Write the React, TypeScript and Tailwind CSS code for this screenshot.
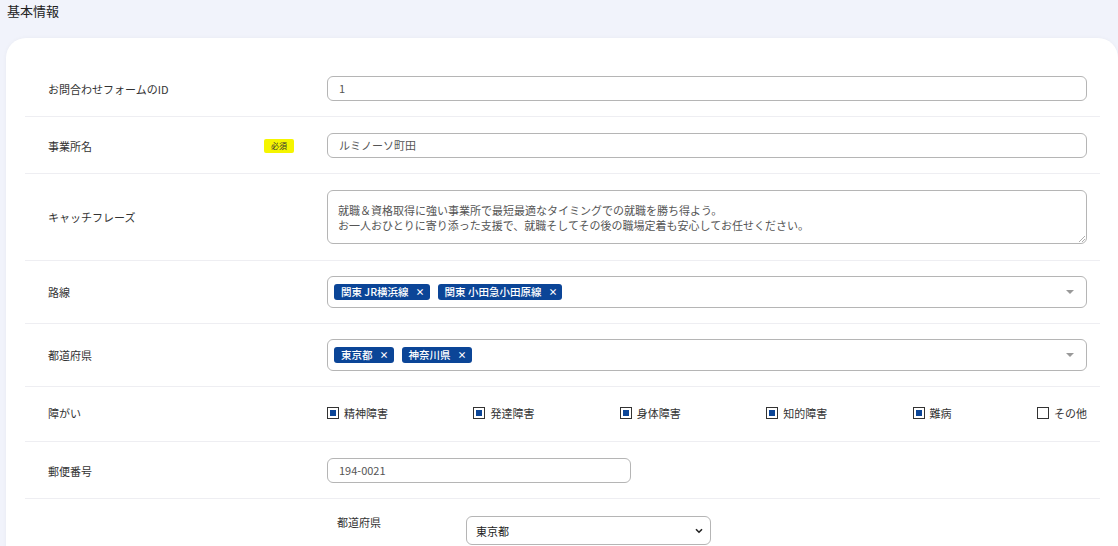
import React from 'react';

const FONT = { fontFamily: '"Noto Sans CJK JP", "Noto Sans", sans-serif' };

const DISABILITIES = [
  { label: '精神障害', checked: true },
  { label: '発達障害', checked: true },
  { label: '身体障害', checked: true },
  { label: '知的障害', checked: true },
  { label: '難病', checked: true },
  { label: 'その他', checked: false },
];

function Row({ label, required, children, className = '' }: { label: string; required?: boolean; children: React.ReactNode; className?: string }) {
  return (
    <div className={`grid grid-cols-[302px_1fr] items-center border-b border-[#eeeef2] ${className}`}>
      <div className="flex items-center pl-[23px] pr-[8px]">
        <span className="text-[11px] text-[#333] leading-[14px]">{label}</span>
        {required && (
          <span className="ml-auto mr-[25px] bg-[#f5f500] text-[#333] text-[8px] leading-[14px] h-[14px] w-[30px] text-center rounded-[2px]">
            必須
          </span>
        )}
      </div>
      <div className="pr-[13px]">{children}</div>
    </div>
  );
}

function TextInput({ value, className = '' }: { value: string; className?: string }) {
  return (
    <div className={`h-[25px] border border-[#b5b5b5] rounded-[6px] flex items-center pl-[11px] text-[11px] text-[#555] ${className}`}>
      {value}
    </div>
  );
}

function Tag({ text }: { text: string }) {
  return (
    <span className="h-[16px] bg-[#0b4597] rounded-[3px] text-white text-[10.5px] leading-[16px] pl-[7px] pr-[5px] flex items-center gap-[7px]">
      <span className="font-medium">{text}</span>
      <span className="text-[9px] font-bold">×</span>
    </span>
  );
}

function MultiSelect({ tags }: { tags: string[] }) {
  return (
    <div className="h-[32px] border border-[#b5b5b5] rounded-[6px] flex items-center pl-[6px] pr-[12px]">
      <div className="flex items-center gap-[8px] flex-1">
        {tags.map((t) => (
          <Tag key={t} text={t} />
        ))}
      </div>
      <svg width="8" height="4" viewBox="0 0 8 4">
        <path d="M0 0 L8 0 L4 4 Z" fill="#999" />
      </svg>
    </div>
  );
}

function Checkbox({ label, checked }: { label: string; checked: boolean }) {
  return (
    <div className="flex items-center gap-[5px]">
      <span className="w-[12px] h-[12px] border-[1.5px] border-[#333] bg-white flex items-center justify-center">
        {checked && <span className="w-[6px] h-[6px] bg-[#0b4597]" />}
      </span>
      <span className="text-[11px] text-[#333] leading-[14px]">{label}</span>
    </div>
  );
}

export default function App() {
  return (
    <div className="min-h-[546px] bg-[#f1f3fb] overflow-hidden" style={FONT}>
      <div className="pl-[7px] pt-[3px] h-[38px] text-[13px] text-[#222] leading-[16px]">基本情報</div>
      <div className="ml-[6px] bg-white rounded-t-[20px] pl-[19px] pr-[18px] pt-[22px] shadow-[0_0_4px_rgba(0,0,0,0.04)]">
        <Row label="お問合わせフォームのID" className="pt-[16px] pb-[15px]">
          <TextInput value="1" />
        </Row>
        <Row label="事業所名" required className="pt-[16px] pb-[15px]">
          <TextInput value="ルミノーソ町田" />
        </Row>
        <Row label="キャッチフレーズ" className="pt-[16px] pb-[16px]">
          <div className="relative h-[54px] border border-[#b5b5b5] rounded-[6px] pl-[10px] pt-[12px] text-[11px] text-[#555] leading-[15px]">
            <div>就職＆資格取得に強い事業所で最短最適なタイミングでの就職を勝ち得よう。</div>
            <div>お一人おひとりに寄り添った支援で、就職そしてその後の職場定着も安心してお任せください。</div>
            <svg className="absolute right-[1px] bottom-[1px]" width="6" height="6" viewBox="0 0 6 6">
              <path d="M6 0 L0 6 M6 3 L3 6" stroke="#999" strokeWidth="0.8" />
            </svg>
          </div>
        </Row>
        <Row label="路線" className="pt-[15px] pb-[15px]">
          <MultiSelect tags={['関東 JR横浜線', '関東 小田急小田原線']} />
        </Row>
        <Row label="都道府県" className="pt-[15px] pb-[15px]">
          <MultiSelect tags={['東京都', '神奈川県']} />
        </Row>
        <Row label="障がい" className="pt-[19px] pb-[21px]">
          <div className="flex items-center justify-between">
            {DISABILITIES.map((d) => (
              <Checkbox key={d.label} label={d.label} checked={d.checked} />
            ))}
          </div>
        </Row>
        <Row label="郵便番号" className="pt-[16px] pb-[15px]">
          <TextInput value="194-0021" className="w-[304px]" />
        </Row>
        <div className="grid grid-cols-[302px_1fr] pt-[17px] pb-[20px]">
          <div />
          <div className="grid grid-cols-[139px_245px] items-start">
            <span className="pl-[10px] text-[11px] text-[#333] leading-[12px]">都道府県</span>
            <div className="h-[29px] border border-[#b5b5b5] rounded-[6px] flex items-center justify-between pl-[9px] pr-[7px] text-[11px] text-[#222]">
              <span className="mt-[2px]">東京都</span>
              <svg width="8" height="6" viewBox="0 0 8 6">
                <path d="M1 1.2 L4 4.2 L7 1.2" stroke="#222" strokeWidth="1.6" fill="none" />
              </svg>
            </div>
          </div>
        </div>
      </div>
    </div>
  );
}
